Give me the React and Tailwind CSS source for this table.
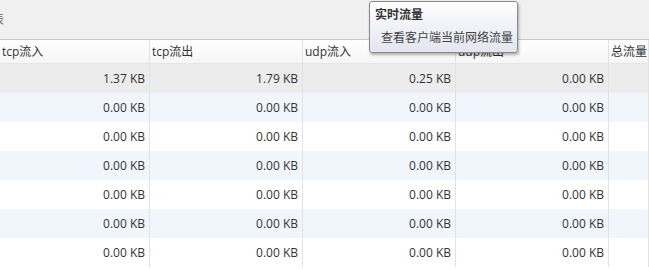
import React from "react";

const cols = [
  { name: "tcp流入", w: "w-[150px]" },
  { name: "tcp流出", w: "w-[153px]" },
  { name: "udp流入", w: "w-[153px]" },
  { name: "udp流出", w: "w-[153px]" },
  { name: "总流量", w: "flex-1" },
];

const rows = [
  ["1.37 KB", "1.79 KB", "0.25 KB", "0.00 KB", ""],
  ["0.00 KB", "0.00 KB", "0.00 KB", "0.00 KB", ""],
  ["0.00 KB", "0.00 KB", "0.00 KB", "0.00 KB", ""],
  ["0.00 KB", "0.00 KB", "0.00 KB", "0.00 KB", ""],
  ["0.00 KB", "0.00 KB", "0.00 KB", "0.00 KB", ""],
  ["0.00 KB", "0.00 KB", "0.00 KB", "0.00 KB", ""],
  ["0.00 KB", "0.00 KB", "0.00 KB", "0.00 KB", ""],
];

const font = { fontFamily: '"Open Sans", "Noto Sans CJK SC", sans-serif' };

export default function App() {
  return (
    <div className="relative w-[649px] h-[270px] overflow-hidden bg-white text-[12px] text-[#333]" style={font}>
      <div className="h-[39px] bg-[#f0f0f0] flex items-center">
        <span className="ml-[-8px] text-[#666]">表</span>
      </div>
      <div className="flex h-[25px] border-t border-[#c8c8c8] border-b border-b-[#e5e5e5] bg-gradient-to-b from-white to-[#f6f6f6]">
        {cols.map((c, i) => (
          <div key={i} className={`${c.w} shrink-0 border-r border-[#e2e2e2] pl-[2px] flex items-center`}>
            {c.name}
          </div>
        ))}
      </div>
      {rows.map((r, ri) => (
        <div
          key={ri}
          className={`flex h-[29px] ${ri === 0 ? "bg-[#ececec]" : ri % 2 === 1 ? "bg-[#f1f6fc]" : "bg-white"}`}
        >
          {r.map((v, ci) => (
            <div key={ci} className={`${cols[ci].w} shrink-0 border-r border-[#e2e2e2] pr-[4px] flex items-center justify-end`}>
              {v}
            </div>
          ))}
        </div>
      ))}
      <div className="absolute left-[369px] top-[1px] w-[149px] h-[52px] rounded-[3px] border border-[#8a8a8a] bg-gradient-to-b from-white to-[#e3e5f0] shadow-[1px_2px_3px_rgba(0,0,0,0.3)]">
        <div className="pl-[5px] pt-[4px] font-bold text-[#333] leading-[18px]">实时流量</div>
        <div className="pl-[11px] pt-[5px] text-[#444] leading-[18px]">查看客户端当前网络流量</div>
      </div>
    </div>
  );
}
